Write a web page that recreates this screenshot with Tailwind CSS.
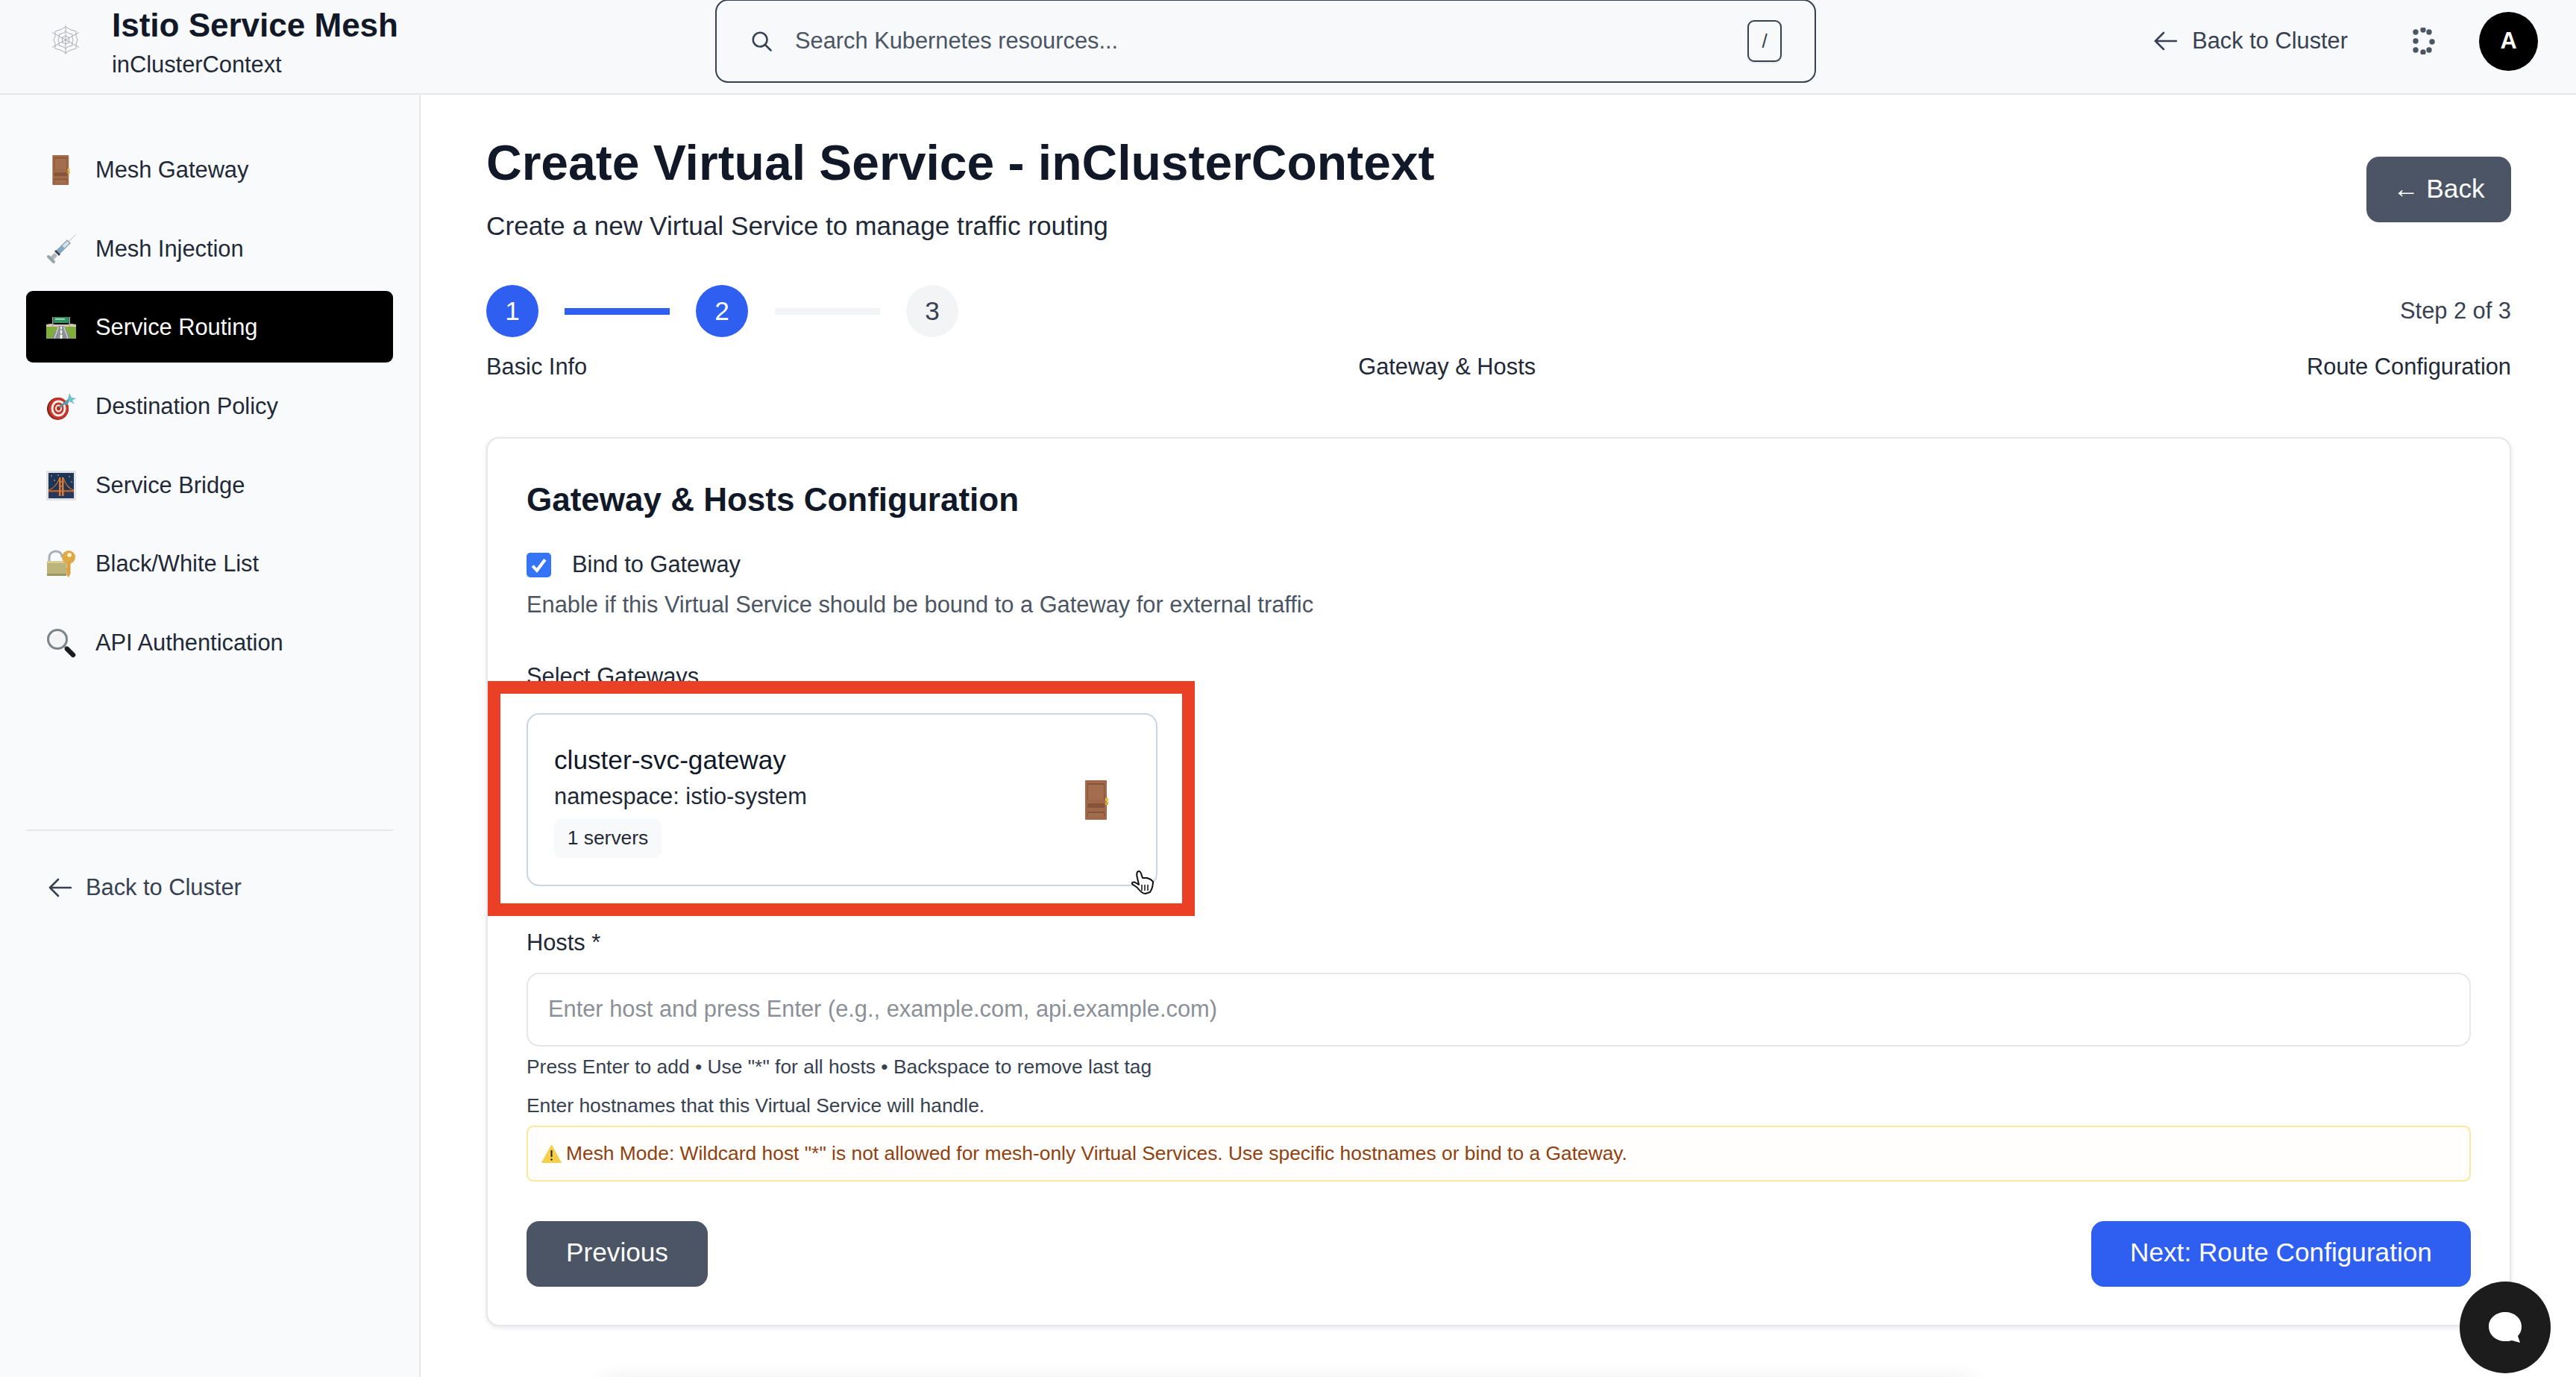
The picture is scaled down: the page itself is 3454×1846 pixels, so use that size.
<!DOCTYPE html>
<html lang="en">
<head>
<meta charset="utf-8">
<title>Create Virtual Service</title>
<script src="https://cdn.jsdelivr.net/npm/@tailwindcss/browser@4"></script>
</head>
<body class="bg-white font-['Liberation_Sans',Arial,sans-serif] text-[#111827] antialiased overflow-hidden">
<div class="relative w-[3454px] h-[1846px] overflow-hidden flex flex-col">

  <!-- Header -->
  <header class="flex items-start h-[127px] shrink-0 bg-[#f8f9fb] border-b-2 border-[#e5e7eb]">
    <div class="flex items-start w-[959px] shrink-0 pl-[69px] pt-[10px]">
      <svg class="w-[38px] h-[39px] mt-[24px] shrink-0" viewBox="0 0 38 39" fill="none" stroke="#a9adb2" stroke-width="1">
        <path d="M19 0V39M1 9.5L37 29.5M37 9.5L1 29.5"/>
        <path d="M19 2Q24 6 33 8Q32 15 35 19.500Q32 24 33 31Q24 33 19 37Q14 33 5 31Q6 24 3 19.500Q6 15 5 8Q14 6 19 2Z"/>
        <path d="M19 8Q22 11 28 12Q27 16 29 19.500Q27 23 28 27Q22 28 19 31Q16 28 10 27Q11 23 9 19.500Q11 16 10 12Q16 11 19 8Z"/>
        <path d="M19 14Q21 15 23.500 16Q23 18 24 19.500Q23 21 23.500 23Q21 24 19 25Q17 24 14.500 23Q15 21 14 19.500Q15 18 14.500 16Q17 15 19 14Z"/>
      </svg>
      <div class="ml-[43px]">
        <div class="text-[44px] leading-[48px] font-bold text-[#111827] whitespace-nowrap">Istio Service Mesh</div>
        <div class="text-[30.8px] leading-[40px] mt-[9px] text-[#1f2937] whitespace-nowrap">inClusterContext</div>
      </div>
    </div>
    <div class="w-[1476px] h-[112px] -mt-[1px] shrink-0 flex items-center pl-[45px] pr-[44px] border-2 border-[#374151] rounded-[17px] bg-[#f8f9fb]">
      <svg class="w-[30px] h-[30px] shrink-0" viewBox="0 0 24 24" fill="none" stroke="#374151" stroke-width="2" stroke-linecap="round"><circle cx="10.500" cy="10.500" r="7.500"/><path d="M16 16l6 6"/></svg>
      <span class="ml-[30px] text-[30.8px] text-[#4b5563] whitespace-nowrap">Search Kubernetes resources...</span>
      <span class="ml-auto w-[46px] h-[56px] flex items-center justify-center border-2 border-[#374151] rounded-[9px] text-[26px] text-[#374151] shadow-sm">/</span>
    </div>
    <div class="ml-auto flex items-center h-[110px] pr-[51px]">
      <svg class="w-[31px] h-[26px]" viewBox="0 0 31 26" fill="none" stroke="#374151" stroke-width="2.600" stroke-linecap="round" stroke-linejoin="round"><path d="M30 13H2M13 2L2 13l11 11"/></svg>
      <span class="ml-[20px] text-[30.8px] text-[#374151] whitespace-nowrap">Back to Cluster</span>
      <svg class="ml-[87px] w-[30px] h-[36px]" viewBox="0 0 30 36" fill="#4b5563"><circle cx="4" cy="6" r="3.700"/><circle cx="14" cy="3" r="3.700"/><circle cx="22" cy="6" r="3.700"/><circle cx="4" cy="18" r="3.700"/><circle cx="26" cy="19" r="3.700"/><circle cx="4" cy="30" r="3.700"/><circle cx="14" cy="33" r="3.700"/><circle cx="22" cy="30" r="3.700"/></svg>
      <div class="ml-[59px] w-[79px] h-[79px] mt-[1px] rounded-full bg-black text-white font-bold text-[30.8px] flex items-center justify-center">A</div>
    </div>
  </header>

  <div class="flex flex-1 min-h-0">
    <!-- Sidebar -->
    <aside class="w-[564px] shrink-0 bg-[#f8fafc] border-r-2 border-[#e5e7eb] px-[35px] pt-[52px]">
      <nav class="flex flex-col gap-[9.700px] text-[30.8px] text-[#1f2937]">
        <a class="flex items-center h-[96px] pl-[27px] gap-[26px] rounded-[9px] pt-[2px]">
          <span class="w-[40px] flex justify-center">
            <svg class="w-[24px] h-[40px]" viewBox="0 0 31 53"><rect width="29" height="53" fill="#a06a4a" rx="1"/><rect x="3" y="4" width="23" height="22" fill="#85543a"/><rect x="4" y="6" width="21" height="20" fill="#a46d4d"/><rect x="3" y="31" width="23" height="6" fill="#85543a"/><rect x="3" y="42" width="23" height="7" fill="#85543a"/><rect x="4" y="44" width="21" height="5" fill="#a46d4d"/><rect x="27" y="24" width="4" height="4" fill="#e8c23f"/><rect x="27" y="29" width="4" height="4" fill="#d9ad2f"/></svg>
          </span>
          <span>Mesh Gateway</span>
        </a>
        <a class="flex items-center h-[96px] pl-[27px] gap-[26px] rounded-[9px] pt-[2px]">
          <svg class="w-[40px] h-[40px] shrink-0" viewBox="0 0 40 40" fill="none"><path d="M30 10L39 1" stroke="#b7bec4" stroke-width="1"/><path d="M14 22L28 8l4 4-14 14z" fill="#cfe2ee" stroke="#8d979e" stroke-width="1.200"/><path d="M14 22l7-7 4 4-7 7z" fill="#7fa8c6"/><path d="M13 21l6 6-2 2-6-6z" fill="#3e4347"/><path d="M11 25l4 4-7 7-4-4z" fill="#aeb6bb"/><path d="M3 30l7 7" stroke="#9aa3a9" stroke-width="4" stroke-linecap="round"/></svg>
          <span>Mesh Injection</span>
        </a>
        <a class="flex items-center h-[96px] pl-[27px] gap-[26px] rounded-[9px] bg-black text-white pt-[2px]">
          <svg class="w-[40px] h-[30px] shrink-0" viewBox="0 0 40 30"><path d="M0 11l6-1 6 1h16l6-1 6 1v4H0z" fill="#d5c8b4"/><rect x="0" y="14" width="40" height="16" fill="#7fae3d"/><path d="M16 13h8L33 30H7z" fill="#8d9094"/><path d="M19.500 14h1v3h-1zM19.300 19h1.400v4h-1.400zM19 25h2v5h-2zM16.500 14L11 30M23.500 14L29 30" stroke="#fff" stroke-width=".8" fill="#fff"/><rect x="8" y="1" width="1.500" height="13" fill="#a6acb0"/><rect x="30.500" y="1" width="1.500" height="13" fill="#a6acb0"/><rect x="10" y="1" width="20" height="8" fill="#2f9462"/><rect x="12" y="3" width="13" height="1.500" fill="#c9e6d6"/></svg>
          <span>Service Routing</span>
        </a>
        <a class="flex items-center h-[96px] pl-[27px] gap-[26px] rounded-[9px] pt-[2px]">
          <svg class="w-[40px] h-[36px] shrink-0" viewBox="0 0 40 36"><ellipse cx="15.500" cy="21" rx="14.500" ry="15" fill="#7b1e18"/><ellipse cx="16.500" cy="20.500" rx="13.500" ry="14.500" fill="#c8342b"/><ellipse cx="16.500" cy="20.500" rx="10" ry="11" fill="#f4efe9"/><ellipse cx="16.500" cy="20.500" rx="7" ry="8" fill="#c8342b"/><ellipse cx="16.500" cy="20.500" rx="4.500" ry="5" fill="#f4efe9"/><ellipse cx="16.500" cy="20.500" rx="2.500" ry="3" fill="#b52c25"/><path d="M18 19L31 8" stroke="#5c8f98" stroke-width="2.500"/><path d="M24 13l5-4 2 3-4 4z" fill="#4fa8b3"/><path d="M29 8l2-8 3 6 6 1-5 3 3 5-7-4z" fill="#6fc0cb"/></svg>
          <span>Destination Policy</span>
        </a>
        <a class="flex items-center h-[96px] pl-[27px] gap-[26px] rounded-[9px] pt-[2px]">
          <svg class="w-[40px] h-[40px] shrink-0" viewBox="0 0 40 40"><rect width="40" height="40" fill="#dfe3e7"/><rect x="3" y="3" width="34" height="34" fill="#1d3557"/><rect x="3" y="27" width="34" height="10" fill="#26395c"/><path d="M3 26Q12 24 18 10M23 10Q28 24 37 26" fill="none" stroke="#c96d2f" stroke-width="1.200"/><rect x="3" y="26" width="34" height="2.500" fill="#b8622b"/><rect x="17" y="9" width="2.500" height="25" fill="#d97b34"/><rect x="21" y="9" width="2.500" height="25" fill="#d97b34"/><rect x="17" y="14" width="6" height="1.500" fill="#d97b34"/><rect x="17" y="20" width="6" height="1.500" fill="#d97b34"/><circle cx="7" cy="7" r=".8" fill="#f0d98a"/><circle cx="16" cy="6" r=".8" fill="#f0d98a"/><circle cx="31" cy="8" r=".8" fill="#f0d98a"/><circle cx="11" cy="13" r=".8" fill="#f0d98a"/><circle cx="34" cy="15" r=".8" fill="#f0d98a"/></svg>
          <span>Service Bridge</span>
        </a>
        <a class="flex items-center h-[96px] pl-[27px] gap-[26px] rounded-[9px] pt-[2px]">
          <svg class="w-[40px] h-[38px] shrink-0" viewBox="0 0 40 38" fill="none"><path d="M4 17V11C4 5 8 2 13 2s8 3 8 8" stroke="#a8afb8" stroke-width="3"/><rect x="1" y="15" width="26" height="20" rx="1" fill="#bdb47c"/><rect x="1" y="15" width="26" height="3" fill="#d6cd97"/><rect x="1" y="32" width="26" height="3" fill="#9d9562"/><circle cx="30" cy="10" r="9" fill="#deaa45"/><circle cx="31" cy="7" r="2.800" fill="#fff4d6"/><path d="M27.500 17h5v15l-2.500 5-2.500-3v-3l-1-1 1-2-1-2 1-2z" fill="#d9a13f"/></svg>
          <span>Black/White List</span>
        </a>
        <a class="flex items-center h-[96px] pl-[27px] gap-[26px] rounded-[9px] pt-[2px]">
          <svg class="w-[40px] h-[40px] shrink-0" viewBox="0 0 40 40" fill="none"><circle cx="15" cy="15" r="12.500" fill="#f3f4f5" stroke="#7d8489" stroke-width="3"/><path d="M7 11a9 9 0 0 1 8-5" stroke="#fff" stroke-width="2"/><path d="M25 25l3 3" stroke="#6b7075" stroke-width="3"/><path d="M28 28l8 8" stroke="#1a1c1e" stroke-width="6.500" stroke-linecap="round"/></svg>
          <span>API Authentication</span>
        </a>
      </nav>
      <div class="mt-[203px] h-[2px] bg-[#e5e7eb]"></div>
      <a class="mt-[52px] flex items-center h-[48px] pl-[30px] text-[30.8px] text-[#374151]">
        <svg class="w-[31px] h-[26px]" viewBox="0 0 31 26" fill="none" stroke="#374151" stroke-width="2.600" stroke-linecap="round" stroke-linejoin="round"><path d="M30 13H2M13 2L2 13l11 11"/></svg>
        <span class="ml-[19px]">Back to Cluster</span>
      </a>
    </aside>

    <!-- Main -->
    <main class="flex-1 min-w-0 pl-[88px] pr-[87px] pt-[51px]">
      <div class="flex items-center justify-between">
        <div>
          <h1 class="text-[66px] leading-[80px] font-bold text-[#111827] whitespace-nowrap">Create Virtual Service - inClusterContext</h1>
          <p class="mt-[18px] text-[35.2px] leading-[53px] text-[#1f2937]">Create a new Virtual Service to manage traffic routing</p>
        </div>
        <button class="w-[194px] h-[88px] rounded-[17px] bg-[#4b5565] text-white text-[35.2px] flex items-center justify-center">← Back</button>
      </div>

      <div class="mt-[53px] flex items-center justify-between">
        <div class="flex items-center">
          <div class="w-[70px] h-[70px] rounded-full bg-[#2e5ff0] text-white text-[35.2px] flex items-center justify-center">1</div>
          <div class="ml-[35px] w-[141px] h-[9px] bg-[#2e5ff0]"></div>
          <div class="ml-[35px] w-[70px] h-[70px] rounded-full bg-[#2e5ff0] text-white text-[35.2px] flex items-center justify-center">2</div>
          <div class="ml-[36px] w-[141px] h-[9px] bg-[#f3f4f6]"></div>
          <div class="ml-[35px] w-[70px] h-[70px] rounded-full bg-[#f3f4f6] text-[#374151] text-[35.2px] flex items-center justify-center">3</div>
        </div>
        <span class="text-[30.8px] text-[#374151]">Step 2 of 3</span>
      </div>
      <div class="mt-[18px] flex justify-between text-[30.8px] leading-[44px] text-[#1f2937]">
        <span>Basic Info</span><span>Gateway &amp; Hosts</span><span>Route Configuration</span>
      </div>

      <section class="mt-[72px] h-[1192px] rounded-[17px] border-2 border-[#e5e7eb] bg-white shadow-[0_2px_6px_rgba(0,0,0,0.1)] px-[52px] pt-[52px]">
        <h2 class="text-[44px] leading-[60px] font-bold text-[#111827]">Gateway &amp; Hosts Configuration</h2>
        <label class="mt-[35px] flex items-center h-[44px] text-[30.8px] text-[#1f2937]">
          <span class="w-[33px] h-[33px] rounded-[5px] bg-[#3574f6] flex items-center justify-center">
            <svg class="w-[25px] h-[25px]" viewBox="0 0 24 24" fill="none" stroke="#fff" stroke-width="4"><path d="M4 13l5.500 6L20 5"/></svg>
          </span>
          <span class="ml-[28px]">Bind to Gateway</span>
        </label>
        <p class="mt-[10px] text-[30.8px] leading-[44px] text-[#4b5563]">Enable if this Virtual Service should be bound to a Gateway for external traffic</p>
        <div class="mt-[52px] text-[30.8px] leading-[44px] text-[#1f2937]">Select Gateways</div>
        <div class="mt-[27px] w-[846px] h-[232px] rounded-[17px] border-2 border-[#cbd5e1] bg-white pl-[35px] pr-[64px] pt-[42px] flex items-center justify-between">
          <div class="-mt-[40px]">
            <div class="text-[35.2px] leading-[44px] text-[#111827]">cluster-svc-gateway</div>
            <div class="mt-[5px] text-[30.8px] leading-[44px] text-[#1f2937]">namespace: istio-system</div>
            <div class="mt-[8px] w-[144px] h-[52px] rounded-[9px] bg-[#f8f9fb] text-[26.4px] text-[#1f2937] flex items-center justify-center">1 servers</div>
          </div>
          <svg class="w-[31px] h-[53px] -mt-[42px]" viewBox="0 0 31 53"><rect width="29" height="53" fill="#a06a4a" rx="1"/><rect x="3" y="4" width="23" height="22" fill="#85543a"/><rect x="4" y="6" width="21" height="20" fill="#a46d4d"/><rect x="3" y="31" width="23" height="6" fill="#85543a"/><rect x="3" y="42" width="23" height="7" fill="#85543a"/><rect x="4" y="44" width="21" height="5" fill="#a46d4d"/><rect x="27" y="24" width="4" height="4" fill="#e8c23f"/><rect x="27" y="29" width="4" height="4" fill="#d9ad2f"/></svg>
        </div>
        <div class="mt-[54px] text-[30.8px] leading-[44px] text-[#1f2937]">Hosts *</div>
        <div class="mt-[18px] h-[99px] rounded-[17px] border-2 border-[#e5e7eb] pl-[27px] flex items-center text-[30.8px] text-[#8b9098]">Enter host and press Enter (e.g., example.com, api.example.com)</div>
        <p class="mt-[9px] text-[26.4px] leading-[36px] text-[#374151]">Press Enter to add • Use "*" for all hosts • Backspace to remove last tag</p>
        <p class="mt-[16px] text-[26.4px] leading-[36px] text-[#374151]">Enter hostnames that this Virtual Service will handle.</p>
        <div class="mt-[9px] h-[75px] rounded-[9px] border-2 border-[#fce79a] bg-[#fffefc] pl-[18px] flex items-center text-[26.4px] text-[#92400e]">
          <svg class="w-[27px] h-[25px] mr-[6px] shrink-0" viewBox="0 0 27 25"><path d="M13.500 1L26.500 24.500H.5z" fill="#f5cf47" stroke="#f5cf47" stroke-linejoin="round"/><path d="M13.500 8v9" stroke="#222" stroke-width="2"/><circle cx="13.500" cy="20.500" r="1.200" fill="#222"/></svg>
          <span>Mesh Mode: Wildcard host "*" is not allowed for mesh-only Virtual Services. Use specific hostnames or bind to a Gateway.</span>
        </div>
        <div class="mt-[53px] flex justify-between">
          <button class="w-[243px] h-[88px] pb-[3px] rounded-[17px] bg-[#4b5565] text-white text-[35.2px]">Previous</button>
          <button class="w-[509px] h-[88px] pb-[3px] rounded-[17px] bg-[#2e5ff0] text-white text-[35.2px]">Next: Route Configuration</button>
        </div>
      </section>
    </main>
  </div>

  <!-- Overlays -->
  <div class="absolute left-[654px] top-[913px] w-[948px] h-[315px] border-[17px] border-[#ea4025] pointer-events-none"></div>
  <svg class="absolute left-[1517px] top-[1166px] w-[31px] h-[33px]" viewBox="0 0 31 33"><path d="M8 3c2-2 4-1 5 2l2 6 6 0 5 2 3 3c0 6-2 11-4 14l-6 2c-4 0-8-4-11-8l-7-5c-1-2 2-3 4-2l5 3-2-9c-1-3 -1-6 0-8z" fill="#fff" stroke="#111" stroke-width="2" stroke-linejoin="round"/><path d="M14 20v8M18 20v8M22 20v8" stroke="#111" stroke-width="1.500"/></svg>
  <div class="absolute left-[3298px] top-[1718px] w-[122px] h-[123px] rounded-full bg-[#1c1c1c] flex items-center justify-center">
    <svg class="w-[44px] h-[42px]" viewBox="0 0 44 42"><path d="M22 0C34 0 44 8 44 19c0 6-2 10-5 13l3 9-11-3c-3 1-6 1-9 1C10 39 0 31 0 19 0 8 10 0 22 0z" fill="#fff"/></svg>
  </div>
  <div class="absolute left-[805px] top-[1847px] w-[1845px] h-[60px] rounded-[17px] bg-white shadow-[0_0_26px_rgba(0,0,0,0.08)]"></div>
</div>
</body>
</html>
